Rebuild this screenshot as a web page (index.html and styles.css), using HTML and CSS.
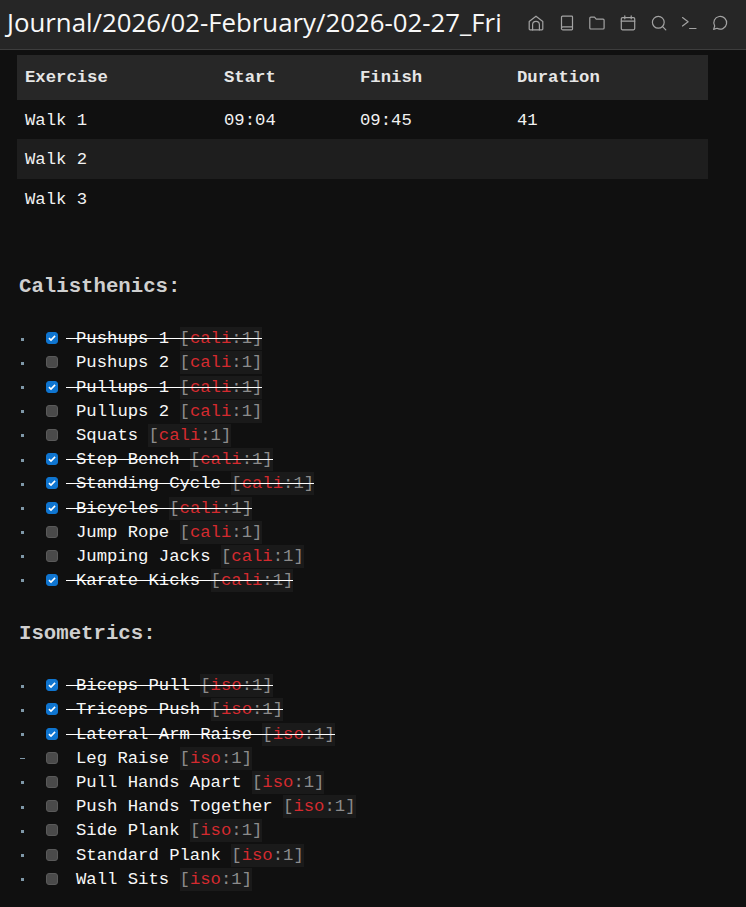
FILE: index.html
```html
<!DOCTYPE html>
<html lang="en">
<head>
<meta charset="utf-8">
<title>2026-02-27_Fri</title>
<link rel="stylesheet" href="styles.css">
</head>
<body>
<header class="titlebar">
  <h1 class="title">Journal/2026/02-February/2026-02-27_Fri</h1>
  <nav class="icons">
    <svg class="icon" viewBox="0 0 16 16"><path d="M1.2 14V6.4L8 1.2l6.8 5.2V14a.9.9 0 0 1-.9.9H2.1a.9.9 0 0 1-.9-.9Z"/><path d="M4.6 14.9V9.8a3.4 3.4 0 0 1 6.8 0v5.1"/></svg>
    <svg class="icon" viewBox="0 0 16 16"><path d="M2.5 13V2.2a1 1 0 0 1 1-1h9.2a.8.8 0 0 1 .8.8V14a.8.8 0 0 1-.8.8H3.8a1.3 1.3 0 0 1-1.3-1.8Zm0 0c.2-.8.7-1.2 1.3-1.2h9.7"/></svg>
    <svg class="icon" viewBox="0 0 16 16"><path d="M.8 3.2a1 1 0 0 1 1-1h3.7l1.7 2h6.9a1 1 0 0 1 1 1V13a1 1 0 0 1-1 1H1.8a1 1 0 0 1-1-1Z"/></svg>
    <svg class="icon" viewBox="0 0 16 16"><rect x="1.3" y="2.6" width="13.4" height="12.2" rx="1.2"/><path d="M1.3 6.2h13.4M4.8.8v3M11.2.8v3"/></svg>
    <svg class="icon" viewBox="0 0 16 16"><circle cx="7.3" cy="7.3" r="5.9"/><path d="m11.6 11.6 3.2 3.3"/></svg>
    <svg class="icon" viewBox="0 0 16 16"><path d="m1.5 2.6 5.6 4.2-5.6 4.2M8.6 13.5h6.4"/></svg>
    <svg class="icon" viewBox="0 0 16 16"><path d="M1.6 14.4 2.7 11A6.4 6.4 0 1 1 5 13.3l-3.4 1.1Z"/></svg>
  </nav>
</header>
<main class="note">
  <table class="log">
    <thead><tr><th class="c1">Exercise</th><th class="c2">Start</th><th class="c3">Finish</th><th>Duration</th></tr></thead>
    <tbody>
      <tr><td>Walk 1</td><td>09:04</td><td>09:45</td><td>41</td></tr>
      <tr><td>Walk 2</td><td></td><td></td><td></td></tr>
      <tr><td>Walk 3</td><td></td><td></td><td></td></tr>
    </tbody>
  </table>

  <h2 class="heading first">Calisthenics:</h2>
  <ul class="tasks">
    <li class="done"><input type="checkbox" checked><span class="txt">Pushups 1 <span class="tag"><i>[</i><b>cali</b><i>:1]</i></span></span></li>
    <li><input type="checkbox"><span class="txt">Pushups 2 <span class="tag"><i>[</i><b>cali</b><i>:1]</i></span></span></li>
    <li class="done"><input type="checkbox" checked><span class="txt">Pullups 1 <span class="tag"><i>[</i><b>cali</b><i>:1]</i></span></span></li>
    <li><input type="checkbox"><span class="txt">Pullups 2 <span class="tag"><i>[</i><b>cali</b><i>:1]</i></span></span></li>
    <li><input type="checkbox"><span class="txt">Squats <span class="tag"><i>[</i><b>cali</b><i>:1]</i></span></span></li>
    <li class="done"><input type="checkbox" checked><span class="txt">Step Bench <span class="tag"><i>[</i><b>cali</b><i>:1]</i></span></span></li>
    <li class="done"><input type="checkbox" checked><span class="txt">Standing Cycle <span class="tag"><i>[</i><b>cali</b><i>:1]</i></span></span></li>
    <li class="done"><input type="checkbox" checked><span class="txt">Bicycles <span class="tag"><i>[</i><b>cali</b><i>:1]</i></span></span></li>
    <li><input type="checkbox"><span class="txt">Jump Rope <span class="tag"><i>[</i><b>cali</b><i>:1]</i></span></span></li>
    <li><input type="checkbox"><span class="txt">Jumping Jacks <span class="tag"><i>[</i><b>cali</b><i>:1]</i></span></span></li>
    <li class="done"><input type="checkbox" checked><span class="txt">Karate Kicks <span class="tag"><i>[</i><b>cali</b><i>:1]</i></span></span></li>
  </ul>

  <h2 class="heading">Isometrics:</h2>
  <ul class="tasks">
    <li class="done"><input type="checkbox" checked><span class="txt">Biceps Pull <span class="tag"><i>[</i><b>iso</b><i>:1]</i></span></span></li>
    <li class="done"><input type="checkbox" checked><span class="txt">Triceps Push <span class="tag"><i>[</i><b>iso</b><i>:1]</i></span></span></li>
    <li class="done"><input type="checkbox" checked><span class="txt">Lateral Arm Raise <span class="tag"><i>[</i><b>iso</b><i>:1]</i></span></span></li>
    <li class="dash"><input type="checkbox"><span class="txt">Leg Raise <span class="tag"><i>[</i><b>iso</b><i>:1]</i></span></span></li>
    <li><input type="checkbox"><span class="txt">Pull Hands Apart <span class="tag"><i>[</i><b>iso</b><i>:1]</i></span></span></li>
    <li><input type="checkbox"><span class="txt">Push Hands Together <span class="tag"><i>[</i><b>iso</b><i>:1]</i></span></span></li>
    <li><input type="checkbox"><span class="txt">Side Plank <span class="tag"><i>[</i><b>iso</b><i>:1]</i></span></span></li>
    <li><input type="checkbox"><span class="txt">Standard Plank <span class="tag"><i>[</i><b>iso</b><i>:1]</i></span></span></li>
    <li><input type="checkbox"><span class="txt">Wall Sits <span class="tag"><i>[</i><b>iso</b><i>:1]</i></span></span></li>
  </ul>
</main>
</body>
</html>
```
FILE: styles.css
```css
html, body {
  margin: 0;
  height: 907px;
  overflow: hidden;
  background: #101010;
  color: #f2f2f2;
  font-family: "Liberation Mono", monospace;
}
.titlebar {
  display: flex;
  align-items: center;
  justify-content: space-between;
  box-sizing: border-box;
  height: 50px;
  padding: 0 18px 3px 7px;
  background: #262626;
  border-bottom: 1px solid #3d3d3d;
}
.title {
  margin: 0;
  font: 400 25.8px/1 "Open Sans", sans-serif;
  color: #f8f8f8;
  white-space: nowrap;
}
.icons {
  display: flex;
  gap: 14.7px;
  align-items: center;
}
.icon {
  width: 16px;
  height: 16px;
  fill: none;
  stroke: #a3a3a3;
  stroke-width: 1.2;
  stroke-linecap: round;
  stroke-linejoin: round;
}
.note {
  padding: 5px 0 0 17px;
}
.log {
  width: 691px;
  border-collapse: collapse;
  table-layout: fixed;
  font-size: 17.25px;
}
.log th {
  height: 45px;
  padding: 0 8px;
  background: #272727;
  color: #e6e6e6;
  font-weight: 700;
  text-align: left;
}
.log td {
  height: 40px;
  padding: 0 8px;
  box-sizing: border-box;
}
.log tbody tr:first-child td {
  height: 39px;
  padding-top: 2px;
}
.log tbody tr:nth-child(2) td {
  background: #1e1e1e;
}
.c1 { width: 183px; }
.c2 { width: 120px; }
.c3 { width: 141px; }
.heading {
  margin: 0;
  padding: 30px 0 0 2px;
  font-size: 20.7px;
  line-height: 24px;
  font-weight: 700;
  color: #cfcfcf;
}
.heading.first {
  padding-top: 56px;
}
.tasks {
  list-style: none;
  margin: 27.6px 0 0;
  padding: 0;
}
.tasks + .heading {
  padding-top: 29.4px;
}
.tasks li {
  position: relative;
  display: flex;
  align-items: center;
  height: 24.2px;
  font-size: 17.25px;
  color: #f8f8f8;
}
.tasks li::before {
  content: "";
  position: absolute;
  left: 4px;
  top: 11px;
  width: 3px;
  height: 3px;
  background: #7f98a8;
}
.tasks li.dash::before {
  left: 3px;
  width: 5px;
  height: 1px;
  top: 12px;
}
.tasks input {
  appearance: none;
  box-sizing: border-box;
  width: 12px;
  height: 12px;
  margin: 0 18px 1px 29px;
  flex: none;
  border-radius: 3px;
  background: #4a4a4a;
  border: 1px solid #5a5a5a;
}
.tasks input:checked {
  border-color: #0f75d0;
  background:
    url("data:image/svg+xml,%3Csvg xmlns='http://www.w3.org/2000/svg' viewBox='0 0 12 12'%3E%3Cpath d='M2.3 6.2 4.8 8.6 9.7 3.4' fill='none' stroke='white' stroke-width='1.9'/%3E%3C/svg%3E") center/100% no-repeat,
    #0f75d0;
}
.txt {
  white-space: pre;
}
.done .txt {
  position: relative;
  padding-left: 10px;
  margin-left: -10px;
}
.done .txt::after {
  content: "";
  position: absolute;
  left: 0;
  right: 0;
  top: 9px;
  height: 1px;
  background: #ffffff;
}
.tag {
  background: #1a1a1a;
  padding: 2px 0;
  font-style: normal;
}
.tag i {
  font-style: normal;
  color: #8c8c8c;
}
.tag b {
  font-weight: 400;
  color: #d42a2f;
}
```
